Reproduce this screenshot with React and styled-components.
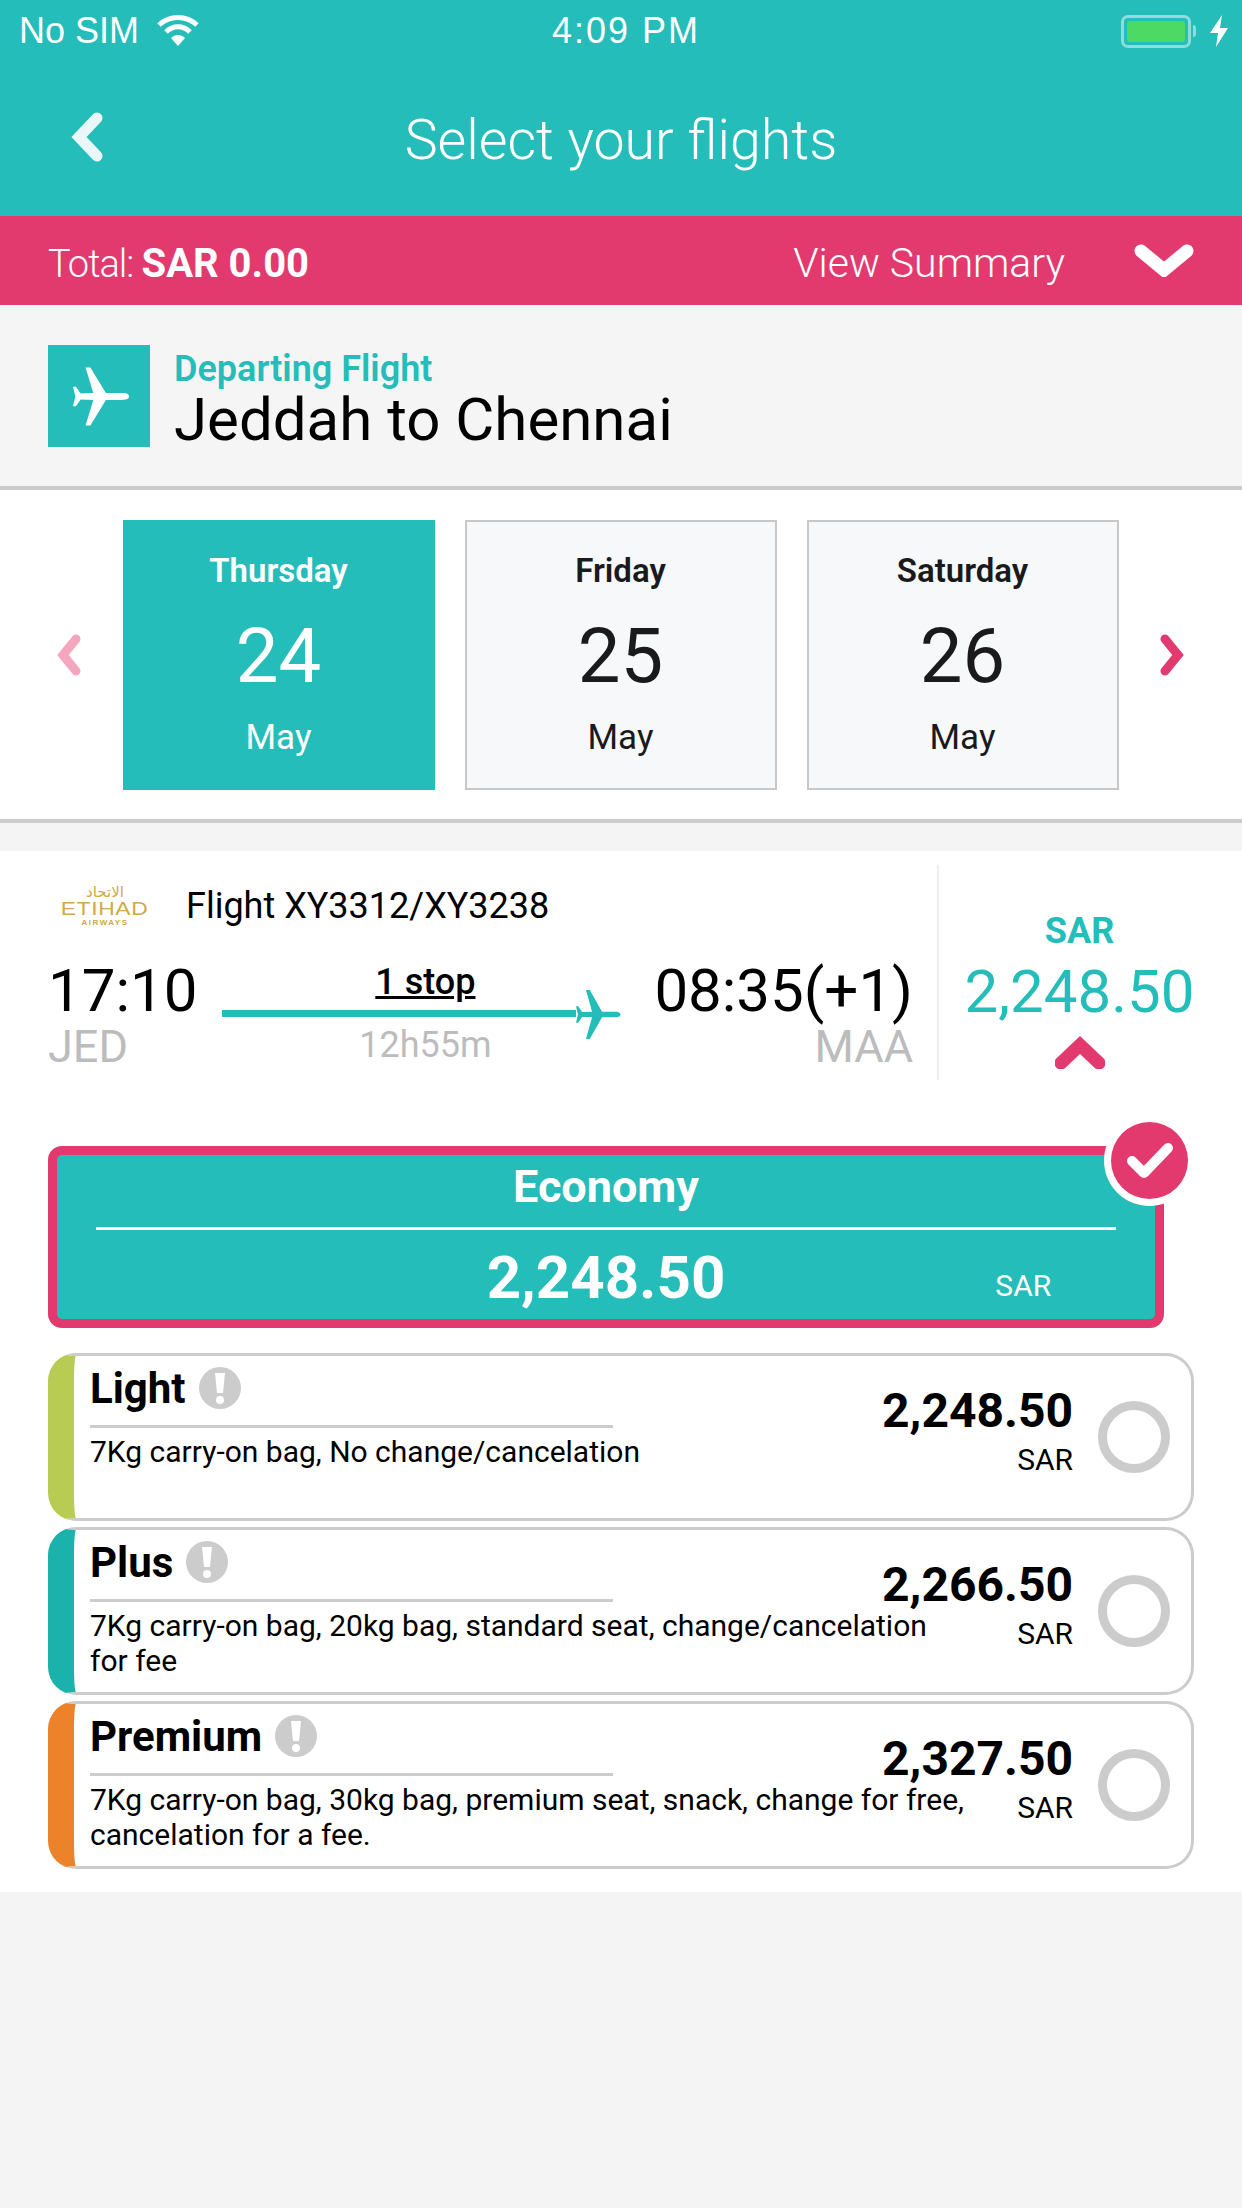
import React from "react";
import styled, {createGlobalStyle} from "styled-components";

const teal = "#25bdb9";
const pink = "#e2396e";

const GlobalStyle = createGlobalStyle`
  html, body {
    margin: 0;
    padding: 0;
    background: #f4f4f4;
    font-family: Roboto, "Liberation Sans", sans-serif;
  }
`;

const PLANE =
  "M58 30C58 27 54 26.5 50 26.5L34 26.5L18 0L13 0L21 26.5L8 27L3 20L0 20L2.5 30L0 40L3 40L8 33L21 33.5L13 60L18 60L34 33.5L50 33.5C54 33.5 58 33 58 30Z";

const plans = [
  {name: "Light", color: "#b8cb52", price: "2,248.50", desc: "7Kg carry-on bag, No change/cancelation"},
  {name: "Plus", color: "#1cb2ac", price: "2,266.50", desc: "7Kg carry-on bag, 20kg bag, standard seat, change/cancelation for fee"},
  {name: "Premium", color: "#ec832a", price: "2,327.50", desc: "7Kg carry-on bag, 30kg bag, premium seat, snack, change for free, cancelation for a fee."},
];

const dates = [
  {day: "Thursday", num: "24", active: true},
  {day: "Friday", num: "25"},
  {day: "Saturday", num: "26"},
];

const Chevron = ({points, color, width, height, stroke}) => (
  <svg width={width} height={height} viewBox={`0 0 ${width} ${height}`}>
    <polyline points={points} fill="none" stroke={color} strokeWidth={stroke} strokeLinecap="round" strokeLinejoin="miter" />
  </svg>
);

function App() {
  return (
    <Page>
      <GlobalStyle />
      <TopBar>
        <StatusBar>
          <StatusLeft>
            No SIM
            <svg width="44" height="32" viewBox="0 0 44 32">
              <path d="M3 10C14 0 30 0 41 10" fill="none" stroke="#fff" strokeWidth="5" />
              <path d="M10 17C17 10 27 10 34 17" fill="none" stroke="#fff" strokeWidth="5" />
              <path d="M22 31L15 23C19 19 25 19 29 23Z" fill="#fff" />
            </svg>
          </StatusLeft>
          <StatusTime>4:09 PM</StatusTime>
          <StatusRight>
            <Battery>
              <BatteryFill />
            </Battery>
            <BatteryTip />
            <svg width="18" height="32" viewBox="0 0 18 32">
              <path d="M12 0L0 18H8L6 32L18 13H10Z" fill="#fff" />
            </svg>
          </StatusRight>
        </StatusBar>
        <NavBar>
          <BackButton>
            <Chevron points="26,6 8,25 26,44" color="#eaf7f8" width={32} height={50} stroke={11} />
          </BackButton>
          <Title>Select your flights</Title>
        </NavBar>
      </TopBar>

      <TotalBar>
        <TotalText>
          Total: <b>SAR 0.00</b>
        </TotalText>
        <SummaryToggle>
          <span>View Summary</span>
          <Chevron points="7,7 30,26 53,7" color="#fff" width={60} height={33} stroke={13} />
        </SummaryToggle>
      </TotalBar>

      <RouteHeader>
        <RouteIcon>
          <svg width="58" height="61" viewBox="0 0 60 60">
            <path d={PLANE} fill="#fff" />
          </svg>
        </RouteIcon>
        <div>
          <RouteLabel>Departing Flight</RouteLabel>
          <RouteName>Jeddah to Chennai</RouteName>
        </div>
      </RouteHeader>

      <DateStrip>
        <Chevron points="20,5 7,21 20,37" color="#f4a6bf" width={26} height={42} stroke={9} />
        <DateList>
          {dates.map((d) => (
            <DateCard key={d.num} $active={d.active}>
              <DayName>{d.day}</DayName>
              <DayNumber>{d.num}</DayNumber>
              <Month>May</Month>
            </DateCard>
          ))}
        </DateList>
        <Chevron points="6,5 19,21 6,37" color={pink} width={26} height={42} stroke={9} />
      </DateStrip>

      <Results>
        <FlightRow>
          <FlightInfo>
            <FlightTitle>
              <Logo>
                <LogoArabic>الاتحاد</LogoArabic>
                <LogoName>ETIHAD</LogoName>
                <LogoSub>AIRWAYS</LogoSub>
              </Logo>
              <FlightNumber>Flight XY3312/XY3238</FlightNumber>
            </FlightTitle>
            <Times>
              <Stop>
                <Time>17:10</Time>
                <Airport>JED</Airport>
              </Stop>
              <Route>
                <StopLabel>1 stop</StopLabel>
                <RouteLine>
                  <svg width="46" height="49" viewBox="0 0 60 60" preserveAspectRatio="none">
                    <path d={PLANE} fill={teal} />
                  </svg>
                </RouteLine>
                <Duration>12h55m</Duration>
              </Route>
              <Stop $right>
                <Time>08:35(+1)</Time>
                <Airport>MAA</Airport>
              </Stop>
            </Times>
          </FlightInfo>
          <PricePanel>
            <PriceCurrency>SAR</PriceCurrency>
            <PriceValue>2,248.50</PriceValue>
            <PriceToggle>
              <Chevron points="6,28 25,10 44,28" color={pink} width={50} height={34} stroke={13} />
            </PriceToggle>
          </PricePanel>
        </FlightRow>

        <EconomyBox>
          <EconomyTitle>Economy</EconomyTitle>
          <EconomyPriceRow>
            <EconomyPrice>2,248.50</EconomyPrice>
            <EconomySar>SAR</EconomySar>
          </EconomyPriceRow>
          <CheckBadge>
            <svg width="48" height="37" viewBox="0 0 48 37">
              <polyline points="6,19 18,31 42,6" fill="none" stroke="#fff" strokeWidth="10" strokeLinecap="round" strokeLinejoin="round" />
            </svg>
          </CheckBadge>
        </EconomyBox>

        <PlanList>
          {plans.map((p) => (
            <PlanCard key={p.name} $color={p.color}>
              <PlanBody>
                <PlanHead>
                  <PlanName>{p.name}</PlanName>
                  <svg width="42" height="42" viewBox="0 0 42 42">
                    <circle cx="21" cy="21" r="21" fill="#cccccc" />
                    <path d="M16 6H26L24 26H18Z" fill="#fff" />
                    <circle cx="21" cy="33" r="4" fill="#fff" />
                  </svg>
                </PlanHead>
                <PlanRule />
                <PlanDesc>{p.desc}</PlanDesc>
              </PlanBody>
              <PlanPrice>
                <PlanAmount>{p.price}</PlanAmount>
                <PlanSar>SAR</PlanSar>
              </PlanPrice>
              <Radio />
            </PlanCard>
          ))}
        </PlanList>
      </Results>
    </Page>
  );
}
export default App;

const Page = styled.div`
  width: 1242px;
  min-height: 2208px;
  background: #f4f4f4;
  color: #000;
`;
const TopBar = styled.header`
  height: 216px;
  background: ${teal};
  color: #fff;
`;
const StatusBar = styled.div`
  height: 62px;
  display: grid;
  grid-template-columns: 1fr auto 1fr;
  align-items: center;
  padding: 0 14px 0 19px;
  font-family: "Liberation Sans", sans-serif;
  font-size: 36px;
`;
const StatusLeft = styled.div`
  display: flex;
  align-items: center;
  gap: 17px;
`;
const StatusTime = styled.div`
  padding-left: 5px;
  letter-spacing: 2px;
`;
const StatusRight = styled.div`
  display: flex;
  align-items: center;
  justify-content: flex-end;
`;
const Battery = styled.div`
  width: 70px;
  height: 33px;
  box-sizing: border-box;
  border: 3px solid #8edddb;
  border-radius: 7px;
  padding: 3px;
`;
const BatteryFill = styled.div`
  width: 100%;
  height: 100%;
  background: #4cd964;
  border-radius: 3px;
`;
const BatteryTip = styled.div`
  width: 3px;
  height: 12px;
  margin: 0 14px 0 2px;
  background: #8edddb;
  border-radius: 0 3px 3px 0;
`;
const NavBar = styled.div`
  position: relative;
  height: 154px;
  display: flex;
  align-items: center;
  justify-content: center;
`;
const BackButton = styled.div`
  position: absolute;
  left: 71px;
  top: 50px;
  display: flex;
`;
const Title = styled.h1`
  margin: 0;
  padding-top: 2px;
  font-size: 55.5px;
  font-weight: 300;
`;
const TotalBar = styled.div`
  height: 89px;
  box-sizing: border-box;
  padding: 0 48px;
  display: flex;
  align-items: center;
  justify-content: space-between;
  background: ${pink};
  color: #fff;
`;
const TotalText = styled.div`
  padding-top: 5px;
  font-size: 38px;
  font-weight: 300;
  letter-spacing: -1px;
  b {
    font-size: 40px;
    font-weight: 700;
    letter-spacing: 0;
  }
`;
const SummaryToggle = styled.div`
  display: flex;
  align-items: center;
  gap: 69px;
  font-size: 41px;
  font-weight: 300;
  span {
    padding-top: 5px;
  }
`;
const RouteHeader = styled.div`
  height: 185px;
  box-sizing: border-box;
  padding: 40px 48px 0;
  display: flex;
  align-items: flex-start;
  gap: 24px;
  background: #f5f5f5;
  border-bottom: 4px solid #cccccc;
`;
const RouteIcon = styled.div`
  width: 102px;
  height: 102px;
  box-sizing: border-box;
  padding-left: 5px;
  display: flex;
  align-items: center;
  justify-content: center;
  background: ${teal};
`;
const RouteLabel = styled.div`
  padding-top: 3px;
  font-size: 36px;
  font-weight: 600;
  line-height: 42px;
  color: ${teal};
`;
const RouteName = styled.div`
  font-size: 60px;
  line-height: 60px;
`;
const DateStrip = styled.div`
  height: 333px;
  box-sizing: border-box;
  padding: 0 57px 0 56px;
  display: flex;
  align-items: center;
  justify-content: space-between;
  background: #fff;
  border-bottom: 4px solid #cccccc;
`;
const DateList = styled.div`
  display: grid;
  grid-template-columns: repeat(3, 312px);
  gap: 30px;
`;
const DateCard = styled.div`
  height: 270px;
  box-sizing: border-box;
  padding-top: 29px;
  display: flex;
  flex-direction: column;
  align-items: center;
  background: ${(p) => (p.$active ? teal : "#f7f8fa")};
  color: ${(p) => (p.$active ? "#fff" : "#1a1a1c")};
  border: 2px solid ${(p) => (p.$active ? teal : "#c8c8c8")};
`;
const DayName = styled.div`
  font-size: 33px;
  font-weight: 600;
  line-height: 40px;
`;
const DayNumber = styled.div`
  margin-top: 23px;
  font-size: 76px;
  line-height: 84px;
`;
const Month = styled.div`
  margin-top: 20px;
  font-size: 35px;
  line-height: 40px;
`;
const Results = styled.div`
  margin-top: 28px;
  height: 1041px;
  box-sizing: border-box;
  padding-top: 14px;
  background: #fff;
`;
const FlightRow = styled.div`
  display: flex;
  height: 215px;
`;
const FlightInfo = styled.div`
  width: 939px;
  flex: none;
  box-sizing: border-box;
  padding: 13px 24px 0 48px;
  border-right: 2px solid #eeeeee;
`;
const FlightTitle = styled.div`
  display: flex;
  align-items: center;
  height: 56px;
  gap: 29px;
`;
const Logo = styled.div`
  width: 104px;
  margin-left: 5px;
  display: flex;
  flex-direction: column;
  align-items: center;
  color: #d0a94a;
`;
const LogoArabic = styled.div`
  font-family: "DejaVu Sans", sans-serif;
  font-size: 15px;
  line-height: 15px;
`;
const LogoName = styled.div`
  font-family: "Liberation Sans", sans-serif;
  font-size: 18px;
  line-height: 18px;
  letter-spacing: 0.5px;
  transform: scaleX(1.27);
`;
const LogoSub = styled.div`
  font-family: "Liberation Sans", sans-serif;
  font-weight: 700;
  font-size: 8px;
  line-height: 10px;
  letter-spacing: 1.5px;
`;
const FlightNumber = styled.div`
  font-size: 36px;
`;
const Times = styled.div`
  margin-top: 24px;
  display: flex;
  justify-content: space-between;
`;
const Stop = styled.div`
  display: flex;
  flex-direction: column;
  align-items: ${(p) => (p.$right ? "flex-end" : "flex-start")};
`;
const Time = styled.div`
  font-size: 60px;
  line-height: 65px;
`;
const Airport = styled.div`
  font-size: 45px;
  line-height: 48px;
  color: #bcbcbc;
`;
const Route = styled.div`
  width: 400px;
  margin-right: 7px;
  display: flex;
  flex-direction: column;
  align-items: center;
`;
const StopLabel = styled.div`
  margin: 5px 0 0 6px;
  font-size: 36px;
  font-weight: 500;
  line-height: 38px;
  text-decoration: underline;
`;
const RouteLine = styled.div`
  position: relative;
  width: 400px;
  height: 7px;
  margin-top: 9px;
  background: linear-gradient(${teal}, ${teal}) left / 354px 100% no-repeat;
  svg {
    position: absolute;
    right: 0;
    top: -20px;
  }
`;
const Duration = styled.div`
  margin: 8px 0 0 6px;
  font-size: 36px;
  line-height: 40px;
  color: #bcbcbc;
`;
const PricePanel = styled.div`
  flex: 1;
  display: flex;
  flex-direction: column;
  align-items: center;
  padding: 44px 22px 0 0;
`;
const PriceCurrency = styled.div`
  font-size: 36px;
  font-weight: 700;
  line-height: 44px;
  color: ${teal};
`;
const PriceValue = styled.div`
  margin-top: 4px;
  font-size: 60px;
  line-height: 70px;
  color: ${teal};
`;
const PriceToggle = styled.div`
  display: flex;
  margin-top: 8px;
`;
const EconomyBox = styled.div`
  position: relative;
  margin: 66px 0 0 48px;
  width: 1116px;
  height: 182px;
  box-sizing: border-box;
  padding: 0 39px;
  background: ${teal};
  color: #fff;
  border: 9px solid ${pink};
  border-radius: 14px;
`;
const EconomyTitle = styled.div`
  height: 70px;
  padding-top: 2px;
  font-size: 45px;
  font-weight: 700;
  line-height: 60px;
  text-align: center;
  border-bottom: 3px solid #fff;
`;
const EconomyPriceRow = styled.div`
  display: grid;
  grid-template-columns: 1fr auto 1fr;
  align-items: end;
  margin-top: 13px;
`;
const EconomyPrice = styled.div`
  grid-column: 2;
  font-size: 60px;
  font-weight: 700;
  line-height: 70px;
`;
const EconomySar = styled.div`
  padding: 0 0 7px 270px;
  font-size: 30px;
  line-height: 40px;
  white-space: nowrap;
`;
const CheckBadge = styled.div`
  position: absolute;
  right: -33px;
  top: -33px;
  width: 77px;
  height: 77px;
  display: flex;
  align-items: center;
  justify-content: center;
  background: ${pink};
  border-radius: 50%;
  box-shadow: 0 0 0 7px #fff;
`;
const PlanList = styled.div`
  margin: 25px 48px 0;
  display: flex;
  flex-direction: column;
  gap: 6px;
`;
const PlanCard = styled.div`
  height: 168px;
  box-sizing: border-box;
  display: flex;
  align-items: flex-start;
  background: #fff;
  border: 3px solid #cccccc;
  border-left: 26px solid ${(p) => p.$color};
  border-radius: 28px;
  padding-left: 16px;
`;
const PlanBody = styled.div`
  flex: 1;
  min-width: 0;
`;
const PlanHead = styled.div`
  height: 60px;
  display: flex;
  align-items: center;
  gap: 13px;
  padding-top: 4px;
  box-sizing: border-box;
`;
const PlanName = styled.div`
  font-size: 42px;
  font-weight: 700;
`;
const PlanRule = styled.div`
  width: 523px;
  height: 3px;
  margin-top: 9px;
  background: #cccccc;
`;
const PlanDesc = styled.div`
  margin-top: 6px;
  font-size: 30px;
  line-height: 35px;
`;
const PlanPrice = styled.div`
  width: 103px;
  flex: none;
  padding-top: 27px;
  display: flex;
  flex-direction: column;
  align-items: flex-end;
`;
const PlanAmount = styled.div`
  font-size: 48px;
  font-weight: 700;
  line-height: 56px;
  white-space: nowrap;
`;
const PlanSar = styled.div`
  margin-top: 3px;
  font-size: 30px;
  line-height: 36px;
`;
const Radio = styled.div`
  flex: none;
  align-self: center;
  width: 72px;
  height: 72px;
  box-sizing: border-box;
  margin: 0 21px 0 25px;
  border: 9px solid #cccccc;
  border-radius: 50%;
`;
